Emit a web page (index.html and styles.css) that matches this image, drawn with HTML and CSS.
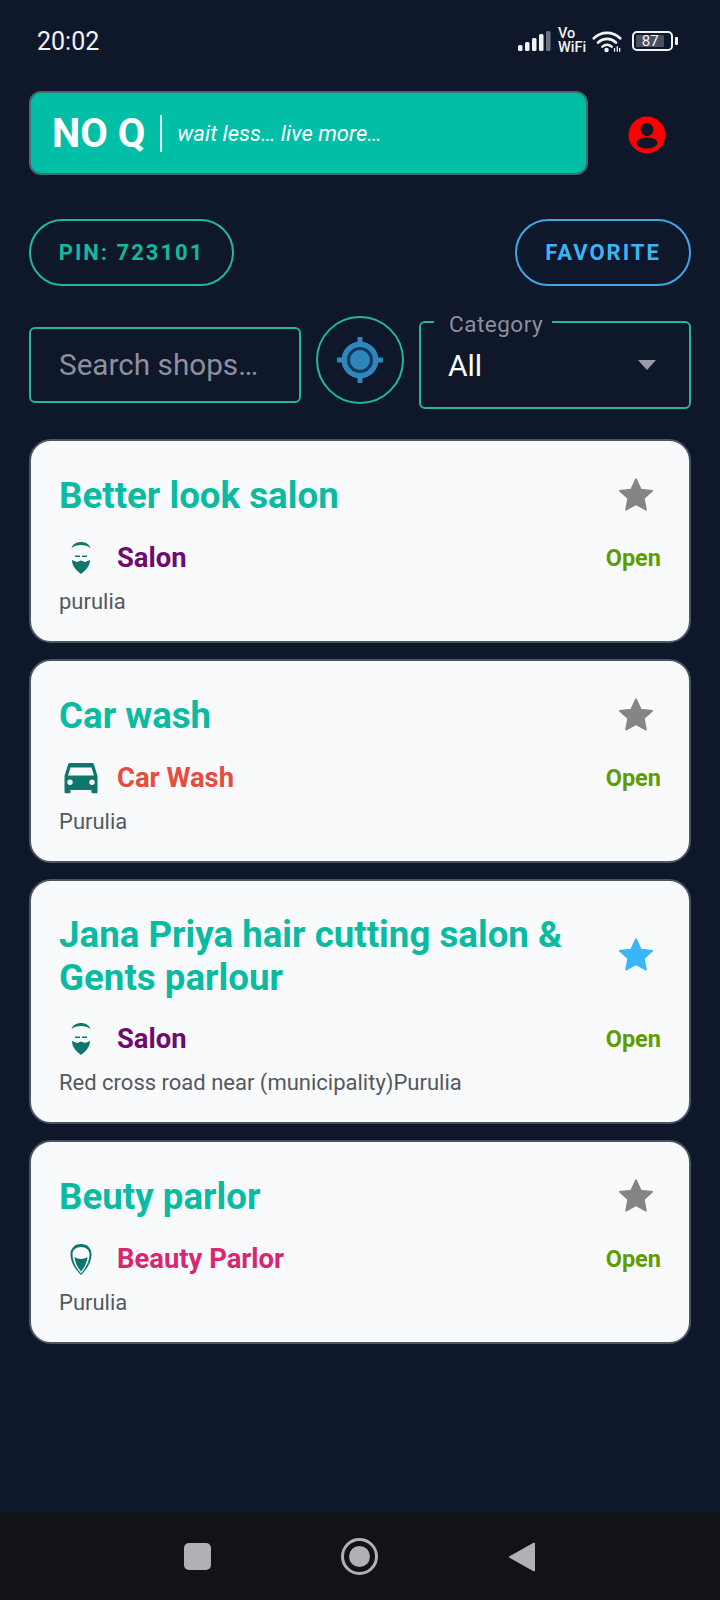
FILE: index.html
```html
<!DOCTYPE html>
<html lang="en">
<head>
    <meta charset="UTF-8">
    <meta name="viewport" content="width=device-width, initial-scale=1.0">
    <title>NO Q</title>
    <link rel="stylesheet" href="styles.css">
</head>
<body>

<div class="screen">
    <div class="status-bar">
        <span class="clock">20:02</span>
        <div class="status-icons">
            <svg class="signal" width="34" height="22" viewBox="0 0 34 22">
                <rect x="0" y="15" width="4.5" height="6" rx="1.5" fill="#f1f2f6"/>
                <rect x="7" y="12" width="4.5" height="9" rx="1.5" fill="#f1f2f6"/>
                <rect x="14" y="8" width="4.5" height="13" rx="1.5" fill="#f1f2f6"/>
                <rect x="21" y="4" width="4.5" height="17" rx="1.5" fill="#f1f2f6"/>
                <rect x="28" y="1" width="4.5" height="20" rx="1.5" fill="#6d7280"/>
            </svg>
            <span class="vowifi">Vo<br>WiFi</span>
            <svg class="wifi" width="30" height="23" viewBox="0 0 32 24">
                <path d="M2 8.5C10 1 22 1 30 8.5" fill="none" stroke="#f1f2f6" stroke-width="3" stroke-linecap="round"/>
                <path d="M6.5 13C12 8 20 8 25.5 13" fill="none" stroke="#f1f2f6" stroke-width="3" stroke-linecap="round"/>
                <path d="M11 17.5C14 15 18 15 21 17.5" fill="none" stroke="#f1f2f6" stroke-width="2.6" stroke-linecap="round"/>
                <circle cx="15.5" cy="21" r="2.4" fill="#f1f2f6"/>
                <path d="M24 23v-4M27 23v-6M29.5 23v-4" stroke="#f1f2f6" stroke-width="1.4"/>
            </svg>
            <div class="battery">
                <div class="battery-body"><span class="battery-level">87</span></div>
                <div class="battery-tip"></div>
            </div>
        </div>
    </div>

    <div class="header-row">
        <div class="brand">
            <span class="brand-name">NO Q</span>
            <span class="brand-tag">wait less… live more…</span>
        </div>
        <svg class="profile" width="38" height="38" viewBox="0 0 38 38">
            <circle cx="19" cy="19" r="18.5" fill="#ff0000"/>
            <circle cx="19" cy="13.5" r="6.5" fill="#0f172a"/>
            <ellipse cx="19" cy="27" rx="10.5" ry="5.5" fill="#0f172a"/>
        </svg>
    </div>

    <div class="pill-row">
        <button class="pill pin">PIN: 723101</button>
        <button class="pill favorite">FAVORITE</button>
    </div>

    <div class="filter-row">
        <div class="search">Search shops…</div>
        <div class="locate">
            <svg width="46" height="46" viewBox="0 0 46 46">
                <path d="M23 1.500v8M23 36.500v8M1.500 23h8M36.500 23h8" stroke="#2f86bd" stroke-width="5" stroke-linecap="round"/>
                <circle cx="23" cy="23" r="18.5" fill="#2f86bd"/>
                <circle cx="23" cy="23" r="11.5" fill="none" stroke="#0f3a5c" stroke-width="3"/>
            </svg>
        </div>
        <div class="category">
            <span class="category-label">Category</span>
            <span class="category-value">All</span>
            <span class="category-arrow"></span>
        </div>
    </div>

    <div class="shop-list">
        <div class="shop-card">
            <div class="shop-top">
                <h2>Better look salon</h2>
                <svg class="star" width="40" height="40" viewBox="0 0 24 24"><path d="M12 2.5l2.900 6.200 6.800.8-5 4.600 1.300 6.700-6-3.300-6 3.300 1.300-6.700-5-4.600 6.800-.8z" fill="#858585" stroke="#858585" stroke-linejoin="round"/></svg>
            </div>
            <div class="shop-meta">
                <svg class="type-icon" width="44" height="44" viewBox="0 0 44 44">
                    <path d="M12.500 12C15 4 29 4 31.500 12C27 8 17 8 12.500 12z" fill="#0f766e"/>
                    <path d="M16 19.500h5v1.500h-5zM23 19.500h5v1.500h-5z" fill="#0f766e"/>
                    <path d="M13 24L18 26L22 24.500L26 26L31 24C31 30 27 34 22 38C17 34 13 30 13 24z" fill="#0f766e"/>
                </svg>
                <span class="shop-type salon">Salon</span>
                <span class="shop-status">Open</span>
            </div>
            <p class="shop-address">purulia</p>
        </div>

        <div class="shop-card">
            <div class="shop-top">
                <h2>Car wash</h2>
                <svg class="star" width="40" height="40" viewBox="0 0 24 24"><path d="M12 2.5l2.900 6.200 6.800.8-5 4.600 1.300 6.700-6-3.300-6 3.300 1.300-6.700-5-4.600 6.800-.8z" fill="#858585" stroke="#858585" stroke-linejoin="round"/></svg>
            </div>
            <div class="shop-meta">
                <svg class="type-icon" width="44" height="44" viewBox="0 0 44 44">
                    <path fill-rule="evenodd" d="M11 7h22c1 0 1.700.6 2 1.500L38.500 20v16c0 .8-.5 1.300-1.300 1.300h-3.400c-.8 0-1.300-.5-1.300-1.300v-2H11.500v2c0 .8-.5 1.300-1.300 1.300H6.800c-.8 0-1.300-.5-1.300-1.300V20L9 8.500C9.300 7.600 10 7 11 7zM11.500 11.500L9 19.500h26L32.500 11.500zM11 23.500a2.700 2.700 0 1 0 0 5.400a2.700 2.700 0 0 0 0-5.400zM33 23.500a2.700 2.700 0 1 0 0 5.400a2.700 2.700 0 0 0 0-5.400z" fill="#0f766e"/>
                </svg>
                <span class="shop-type car">Car Wash</span>
                <span class="shop-status">Open</span>
            </div>
            <p class="shop-address">Purulia</p>
        </div>

        <div class="shop-card">
            <div class="shop-top">
                <h2>Jana Priya hair cutting salon &amp; Gents parlour</h2>
                <svg class="star" width="40" height="40" viewBox="0 0 24 24"><path d="M12 2.5l2.900 6.200 6.800.8-5 4.600 1.300 6.700-6-3.300-6 3.300 1.300-6.700-5-4.600 6.800-.8z" fill="#38b6f8" stroke="#38b6f8" stroke-linejoin="round"/></svg>
            </div>
            <div class="shop-meta">
                <svg class="type-icon" width="44" height="44" viewBox="0 0 44 44">
                    <path d="M12.500 12C15 4 29 4 31.500 12C27 8 17 8 12.500 12z" fill="#0f766e"/>
                    <path d="M16 19.500h5v1.500h-5zM23 19.500h5v1.500h-5z" fill="#0f766e"/>
                    <path d="M13 24L18 26L22 24.500L26 26L31 24C31 30 27 34 22 38C17 34 13 30 13 24z" fill="#0f766e"/>
                </svg>
                <span class="shop-type salon">Salon</span>
                <span class="shop-status">Open</span>
            </div>
            <p class="shop-address">Red cross road near (municipality)Purulia</p>
        </div>

        <div class="shop-card">
            <div class="shop-top">
                <h2>Beuty parlor</h2>
                <svg class="star" width="40" height="40" viewBox="0 0 24 24"><path d="M12 2.5l2.900 6.200 6.800.8-5 4.600 1.300 6.700-6-3.300-6 3.300 1.300-6.700-5-4.600 6.800-.8z" fill="#858585" stroke="#858585" stroke-linejoin="round"/></svg>
            </div>
            <div class="shop-meta">
                <svg class="type-icon" width="44" height="44" viewBox="0 0 44 44">
                    <path fill-rule="evenodd" d="M22 7C29 7 32.500 12 32.500 17C32.500 26 27 33 22 38C17 33 11.500 26 11.500 17C11.500 12 15 7 22 7zM22 10C17 10 13.500 13 13.500 17C13.500 25 18 32 22 36.500C26 32 30.500 25 30.500 17C30.500 13 27 10 22 10z" fill="#0f766e"/>
                    <path d="M15.500 20C19 22.500 25 22.500 28.500 20C28 26 25 31 22 34.500C19 31 16 26 15.500 20z" fill="#0f766e"/>
                </svg>
                <span class="shop-type beauty">Beauty Parlor</span>
                <span class="shop-status">Open</span>
            </div>
            <p class="shop-address">Purulia</p>
        </div>
    </div>

    <div class="nav-bar">
        <div class="nav-square"></div>
        <div class="nav-home"><div class="nav-home-dot"></div></div>
        <svg width="28" height="32" viewBox="0 0 28 32"><path d="M26 2.500V29.500L2 16z" fill="#b1b1b5" stroke="#b1b1b5" stroke-width="2" stroke-linejoin="round"/></svg>
    </div>
</div>

</body>
</html>
```

FILE: styles.css
```css
body {
    margin: 0;
    background-color: #0f172a;
    font-family: Roboto, "Liberation Sans", sans-serif;
}
.screen {
    width: 720px;
    height: 1600px;
    display: flex;
    flex-direction: column;
    box-sizing: border-box;
    padding: 0 29px;
    overflow: hidden;
}
.status-bar {
    height: 82px;
    display: flex;
    justify-content: space-between;
    align-items: center;
    padding: 0 13px 0 8px;
    flex-shrink: 0;
    color: #f1f2f6;
}
.clock {
    font-size: 25px;
    font-weight: 400;
}
.status-icons {
    display: flex;
    align-items: center;
    gap: 6px;
}
.vowifi {
    font-size: 14.5px;
    font-weight: 500;
    line-height: 14px;
    width: 28px;
}
.battery {
    display: flex;
    align-items: center;
    margin-left: 4px;
}
.battery-body {
    width: 41px;
    height: 20px;
    box-sizing: border-box;
    border: 2px solid #f1f2f6;
    border-radius: 5px;
    padding: 2px;
    display: flex;
}
.battery-level {
    flex: 0 0 86%;
    background-color: #4b5060;
    border-radius: 1px;
    font-size: 15px;
    line-height: 12px;
    text-align: center;
    color: #f1f2f6;
}
.battery-tip {
    width: 3px;
    height: 8px;
    margin-left: 2px;
    background-color: #f1f2f6;
    border-radius: 1px;
}
.header-row {
    display: flex;
    align-items: center;
    justify-content: space-between;
    margin-top: 9px;
}
.brand {
    width: 559px;
    height: 84px;
    box-sizing: border-box;
    background-color: #00bfa6;
    border: 2px solid #3d6f72;
    border-radius: 12px;
    display: flex;
    align-items: center;
    padding-left: 21px;
    color: #ffffff;
}
.brand-name {
    font-size: 40px;
    font-weight: 700;
    padding-right: 15px;
    border-right: 2px solid #d9f5f0;
    line-height: 37px;
}
.brand-tag {
    font-size: 22px;
    font-style: italic;
    margin-left: 15px;
}
.profile {
    margin: 4px 25px 0 0;
}
.pill-row {
    display: flex;
    justify-content: space-between;
    margin-top: 44px;
}
.pill {
    height: 67px;
    background: none;
    border-radius: 34px;
    font-family: inherit;
    font-size: 22px;
    font-weight: 700;
    letter-spacing: 2px;
    padding: 0;
}
.pin {
    width: 205px;
    border: 2px solid #1fb89a;
    color: #14b8a0;
}
.favorite {
    width: 176px;
    border: 2px solid #3ea7e6;
    color: #38b6f8;
}
.filter-row {
    display: flex;
    align-items: center;
    justify-content: space-between;
    margin-top: 35px;
    height: 88px;
}
.search {
    width: 272px;
    height: 76px;
    box-sizing: border-box;
    border: 2px solid #1fb89a;
    border-radius: 6px;
    padding-left: 28px;
    font-size: 29.7px;
    line-height: 71px;
    color: #8c8f9e;
}
.locate {
    width: 88px;
    height: 88px;
    margin-bottom: 11px;
    box-sizing: border-box;
    border: 2px solid #1fb89a;
    border-radius: 50%;
    display: flex;
    align-items: center;
    justify-content: center;
}
.category {
    position: relative;
    width: 272px;
    height: 88px;
    box-sizing: border-box;
    border: 2px solid #1fb89a;
    border-radius: 6px;
    padding: 25px 0 0 27px;
    color: #ffffff;
    font-size: 30px;
}
.category-label {
    position: absolute;
    top: -12px;
    left: 13px;
    padding: 0 9px 0 15px;
    background-color: #0f172a;
    font-size: 22.5px;
    letter-spacing: 0.5px;
    color: #8c8f9e;
}
.category-arrow {
    position: absolute;
    right: 33px;
    top: 37px;
    border-left: 9px solid transparent;
    border-right: 9px solid transparent;
    border-top: 10px solid #9a9ba8;
}
.shop-list {
    display: flex;
    flex-direction: column;
    gap: 16px;
    margin-top: 30px;
}
.shop-card {
    box-sizing: border-box;
    background-color: #f8fafc;
    border: 2px solid #4b5563;
    border-radius: 22px;
    padding: 32px 28px 24px 28px;
}
.shop-top {
    display: flex;
    justify-content: space-between;
    align-items: center;
    min-height: 45px;
}
.shop-top h2 {
    margin: 0;
    width: 530px;
    font-size: 36.7px;
    line-height: 43px;
    font-weight: 700;
    color: #0abba1;
}
.star {
    margin: -2px 5px 0 0;
}
.shop-meta {
    display: flex;
    align-items: center;
    margin-top: 18px;
}
.type-icon {
    margin-right: 14px;
}
.shop-type {
    font-size: 27.4px;
    font-weight: 700;
}
.salon {
    color: #6f0a73;
}
.car {
    color: #e74c3c;
}
.beauty {
    color: #d92670;
}
.shop-status {
    margin-left: auto;
    font-size: 23.5px;
    font-weight: 700;
    color: #5f9c00;
}
.shop-address {
    margin: 7px 0 0;
    font-size: 22px;
    line-height: 30px;
    color: #55585f;
}
.nav-bar {
    margin: auto -29px 0;
    height: 87px;
    flex-shrink: 0;
    background-color: #131217;
    display: flex;
    align-items: center;
    justify-content: center;
    gap: 130px;
}
.nav-square {
    width: 27px;
    height: 27px;
    background-color: #b1b1b5;
    border-radius: 5px;
}
.nav-home {
    width: 37px;
    height: 37px;
    box-sizing: border-box;
    border: 3px solid #b1b1b5;
    border-radius: 50%;
    display: flex;
    align-items: center;
    justify-content: center;
}
.nav-home-dot {
    width: 21px;
    height: 21px;
    background-color: #b1b1b5;
    border-radius: 50%;
}
```
